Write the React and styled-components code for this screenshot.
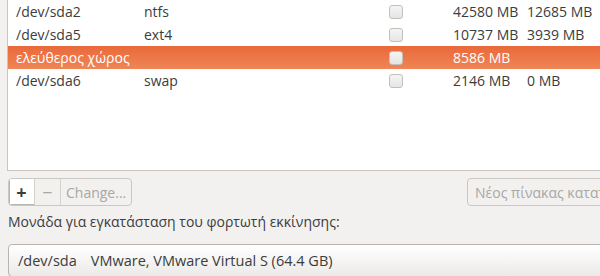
import styled, { createGlobalStyle } from "styled-components"

const partitions = [
    { name: "/dev/sda2", type: "ntfs", size: "42580 MB", used: "12685 MB" },
    { name: "/dev/sda5", type: "ext4", size: "10737 MB", used: "3939 MB" },
    { name: "ελεύθερος χώρος", type: "", size: "8586 MB", used: "", selected: true },
    { name: "/dev/sda6", type: "swap", size: "2146 MB", used: "0 MB" },
]

export default function App() {
    return (
        <>
            <GlobalStyle />
            <Pagina>
                <ListaParticoes>
                    {partitions.map((p) =>
                        <Linha key={p.name} selected={p.selected}>
                            <Celula>{p.name}</Celula>
                            <Celula>{p.type}</Celula>
                            <Celula><Caixa /></Celula>
                            <Celula>{p.size}</Celula>
                            <Celula>{p.used}</Celula>
                        </Linha>
                    )}
                </ListaParticoes>
                <BarraFerramentas>
                    <GrupoBotoes>
                        <BotaoIcone active>+</BotaoIcone>
                        <BotaoIcone>−</BotaoIcone>
                        <BotaoTexto>Change...</BotaoTexto>
                    </GrupoBotoes>
                    <BotaoNovaTabela>Νέος πίνακας κατατμήσεων...</BotaoNovaTabela>
                </BarraFerramentas>
                <Rotulo>Μονάδα για εγκατάσταση του φορτωτή εκκίνησης:</Rotulo>
                <Combo>
                    <span>/dev/sda</span>
                    <span>VMware, VMware Virtual S (64.4 GB)</span>
                </Combo>
            </Pagina>
        </>
    )
}

const GlobalStyle = createGlobalStyle`
body{
    margin: 0;
    font-family: 'Open Sans', 'Noto Sans', sans-serif;
}
`

const Pagina = styled.div`
width: 600px;
height: 276px;
overflow: hidden;
background: #f2f1f0;
padding-left: 7px;
box-sizing: border-box;
color: #3c3c3c;
font-size: 14px;
`

const ListaParticoes = styled.div`
height: 170px;
margin-right: -10px;
background: #ffffff;
border-left: 1px solid #c9c6c2;
border-bottom: 1px solid #c9c6c2;
`

const Linha = styled.div`
display: grid;
grid-template-columns: 128px 245px 64px 74px 1fr;
align-items: center;
height: 23px;
padding-left: 8px;
color: ${props => props.selected ? "#ffffff" : "#3c3c3c"};
background: ${props => props.selected ? "linear-gradient(#e9693a, #f08556)" : "transparent"};
`

const Celula = styled.div`
display: flex;
align-items: center;
white-space: nowrap;
`

const Caixa = styled.div`
width: 12px;
height: 12px;
border: 1px solid #c3c0bc;
border-radius: 3px;
background: linear-gradient(#f4f4f3, #e6e5e3);
`

const BarraFerramentas = styled.div`
display: flex;
align-items: center;
margin-top: 7px;
padding-left: 1px;
`

const GrupoBotoes = styled.div`
display: flex;
height: 26px;
border: 1px solid #cbc8c4;
border-radius: 4px;
overflow: hidden;
background: #f2f1f0;
`

const BotaoIcone = styled.div`
width: 25px;
display: flex;
justify-content: center;
align-items: center;
font-size: 18px;
font-weight: ${props => props.active ? 700 : 400};
color: ${props => props.active ? "#3c3c3c" : "#a9a7a4"};
background: ${props => props.active ? "#ffffff" : "transparent"};
border-right: 1px solid #d6d3cf;
box-shadow: ${props => props.active ? "inset 1px -1px 0 #b8b5b1" : "none"};
`

const BotaoTexto = styled.div`
padding: 0 5px;
display: flex;
align-items: center;
color: #a9a7a4;
`

const BotaoNovaTabela = styled.div`
height: 26px;
display: flex;
align-items: center;
margin-left: auto;
margin-right: -75px;
padding: 0 7px;
border: 1px solid #cbc8c4;
border-radius: 4px;
color: #a9a7a4;
white-space: nowrap;
`

const Rotulo = styled.div`
margin-top: 7px;
height: 18px;
line-height: 18px;
padding-left: 1px;
`

const Combo = styled.div`
margin-top: 13px;
margin-right: -30px;
margin-left: 1px;
height: 33px;
box-sizing: border-box;
display: flex;
align-items: center;
gap: 14px;
padding-left: 9px;
font-size: 14.5px;
border: 1px solid #b8b5b1;
border-radius: 4px;
background: linear-gradient(#ffffff, #ebeae8);
`
